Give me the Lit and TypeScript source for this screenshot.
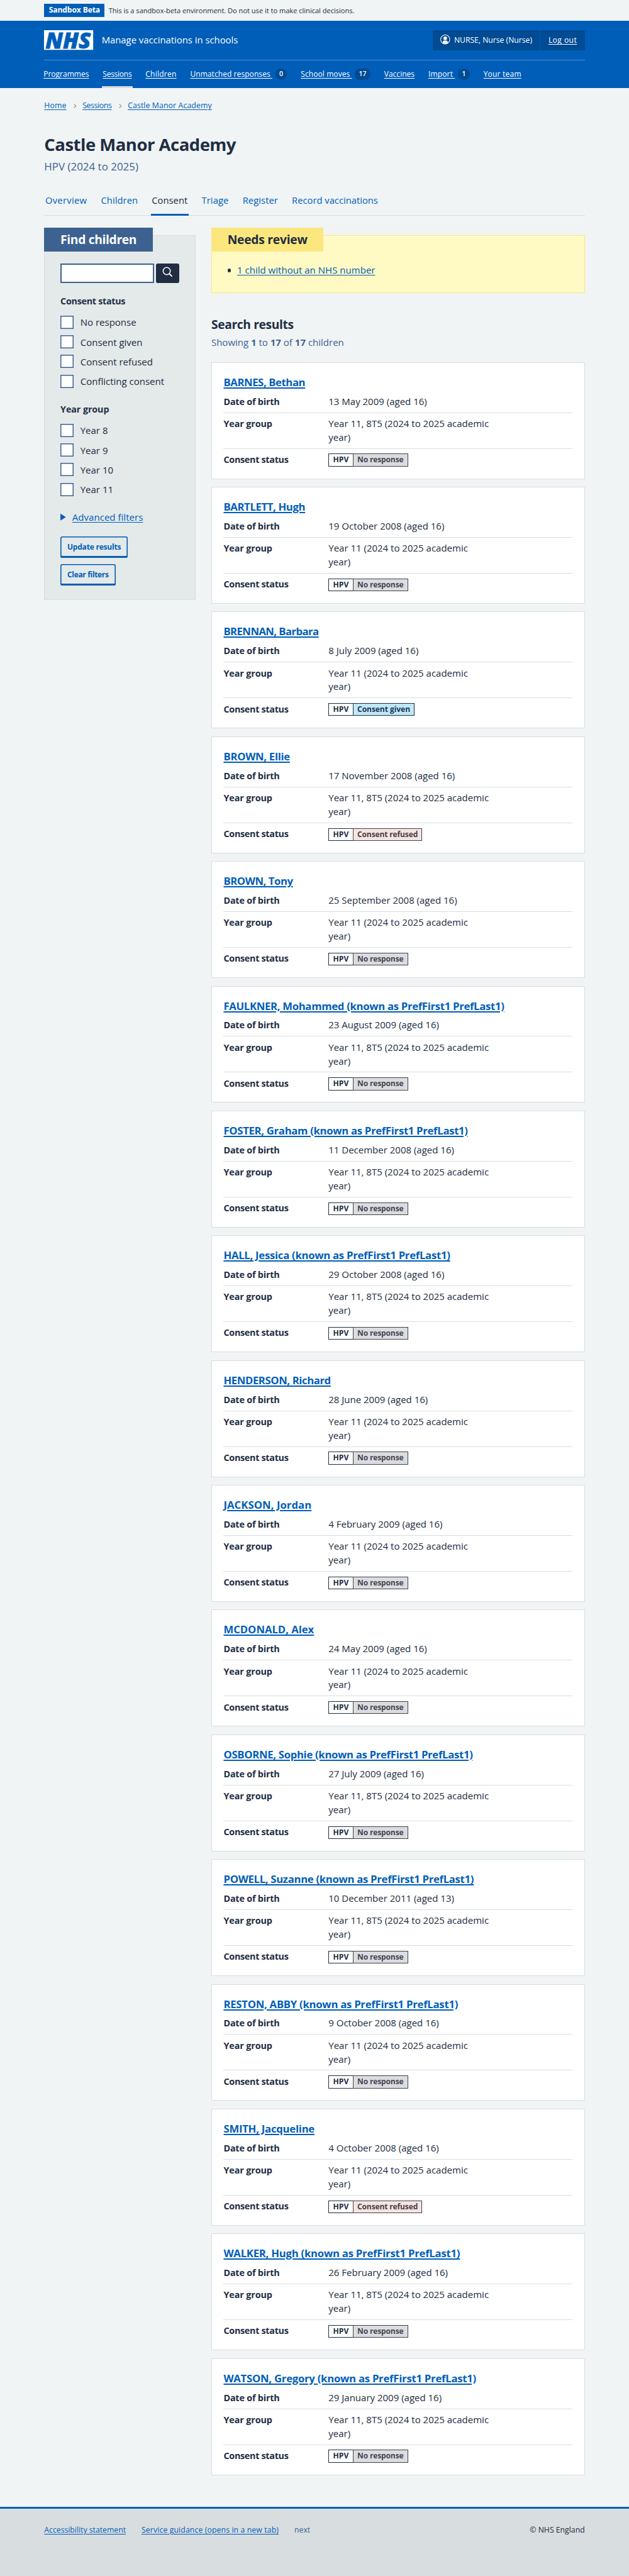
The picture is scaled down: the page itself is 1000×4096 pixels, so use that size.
import { LitElement, html, css, svg, unsafeCSS } from "lit";
import { customElement, property } from "lit/decorators.js";
import { classMap } from "lit/directives/class-map.js";
import { styleMap } from "lit/directives/style-map.js";

/** Design units are scaled to the width of the page. */
const SCALE = 0.78125;
const p = (units: number) => unsafeCSS(`${+(units * SCALE).toFixed(3)}px`);

const FAMILY = '"Open Sans", "Noto Sans", sans-serif';
const ctx = document.createElement("canvas").getContext("2d")!;

/** Tracking that brings a label to its intended width in design units. */
const track = (text: string, width: number, size: number, weight = 400) => {
  ctx.font = `${weight} ${size * SCALE}px ${FAMILY}`;
  const gap = (width * SCALE - ctx.measureText(text).width) / text.length;
  return styleMap({ letterSpacing: `${gap.toFixed(3)}px` });
};

type Status = "none" | "given" | "refused";
const STATUS_TEXT: Record<Status, string> = {
  none: "No response",
  given: "Consent given",
  refused: "Consent refused",
};
const STATUS_WIDTH: Record<Status, number> = { none: 94, given: 107.5, refused: 123 };

interface Child {
  name: string;
  width: number;
  dob: string;
  group: string;
  status: Status;
}

const child = (name: string, width: number, dob: string, group = "Year 11", status: Status = "none"): Child => ({
  name, width, dob, group, status,
});
const KNOWN = " (known as PrefFirst1 PrefLast1)";
const T5 = "Year 11, 8T5";

const CHILDREN: Child[] = [
  child("BARNES, Bethan", 166, "13 May 2009 (aged 16)", T5),
  child("BARTLETT, Hugh", 166, "19 October 2008 (aged 16)"),
  child("BRENNAN, Barbara", 193.5, "8 July 2009 (aged 16)", "Year 11", "given"),
  child("BROWN, Ellie", 135, "17 November 2008 (aged 16)", T5, "refused"),
  child("BROWN, Tony", 141, "25 September 2008 (aged 16)"),
  child("FAULKNER, Mohammed" + KNOWN, 571, "23 August 2009 (aged 16)", T5),
  child("FOSTER, Graham" + KNOWN, 497, "11 December 2008 (aged 16)", T5),
  child("HALL, Jessica" + KNOWN, 461, "29 October 2008 (aged 16)", T5),
  child("HENDERSON, Richard", 218, "28 June 2009 (aged 16)"),
  child("JACKSON, Jordan", 179, "4 February 2009 (aged 16)"),
  child("MCDONALD, Alex", 184, "24 May 2009 (aged 16)"),
  child("OSBORNE, Sophie" + KNOWN, 507, "27 July 2009 (aged 16)", T5),
  child("POWELL, Suzanne" + KNOWN, 509, "10 December 2011 (aged 13)", T5),
  child("RESTON, ABBY" + KNOWN, 477, "9 October 2008 (aged 16)"),
  child("SMITH, Jacqueline", 185, "4 October 2008 (aged 16)", "Year 11", "refused"),
  child("WALKER, Hugh" + KNOWN, 481, "26 February 2009 (aged 16)", T5),
  child("WATSON, Gregory" + KNOWN, 514, "29 January 2009 (aged 16)", T5),
];

@customElement("child-card")
class ChildCard extends LitElement {
  @property({ attribute: false }) child!: Child;

  static styles = css`
    :host {
      display: block;
      box-sizing: border-box;
      height: ${p(237.93)};
      padding: calc(${p(26.8)} - 1px) calc(${p(25)} - 1px) 0;
      background: #fff;
      border: 1px solid #d8dde0;
    }
    .name {
      height: ${p(28)};
      font-size: ${p(21.4)};
      line-height: ${p(28)};
      font-weight: 700;
      white-space: nowrap;
      color: #005eb8;
      text-decoration: underline;
      text-decoration-thickness: 1.5px;
      text-underline-offset: 2px;
    }
    .row {
      display: flex;
      box-sizing: border-box;
      font-size: ${p(19.2)};
      line-height: ${p(28)};
      color: #202d42;
    }
    .row + .row {
      padding-top: ${p(8)};
    }
    .dob {
      height: ${p(48.7)};
      padding-top: ${p(11.5)};
      border-bottom: 1px solid #d8dde0;
    }
    .group {
      height: ${p(73)};
      border-bottom: 1px solid #d8dde0;
    }
    .key {
      width: ${p(213.5)};
      font-weight: 700;
      font-size: ${p(18.4)};
    }
    .value {
      width: ${p(330)};
    }
    .tags {
      display: flex;
      padding-top: ${p(2)};
    }
    .tag {
      box-sizing: border-box;
      height: ${p(26)};
      padding: 0 ${p(8)};
      border: 1px solid #202d42;
      font-size: ${p(15.5)};
      line-height: calc(${p(26)} - 2px);
      font-weight: 700;
      white-space: nowrap;
    }
    .status {
      margin-left: -1px;
    }
    .none {
      background: #d8dde0;
      border-color: #4a3f48;
      color: #4a4450;
    }
    .given {
      background: #bfe8f7;
      color: #1f3557;
    }
    .refused {
      background: #f2e5e4;
      border-color: #503e40;
      color: #503e40;
    }
  `;

  render() {
    const c = this.child;
    const group = `${c.group} (2024 to 2025 academic year)`;
    return html`
      <div class="name"><span style=${track(c.name, c.width, 21.4, 700)}>${c.name}</span></div>
      <div class="row dob">
        <div class="key"><span style=${track("Date of birth", 114, 18.4, 700)}>Date of birth</span></div>
        <div class="value">${c.dob}</div>
      </div>
      <div class="row group">
        <div class="key"><span style=${track("Year group", 99, 18.4, 700)}>Year group</span></div>
        <div class="value">${group}</div>
      </div>
      <div class="row">
        <div class="key"><span style=${track("Consent status", 132, 18.4, 700)}>Consent status</span></div>
        <div class="tags">
          <div class="tag"><span style=${track("HPV", 32, 15.5, 700)}>HPV</span></div>
          <div class="tag status ${c.status}">
            <span style=${track(STATUS_TEXT[c.status], STATUS_WIDTH[c.status], 15.5, 700)}>${STATUS_TEXT[c.status]}</span>
          </div>
        </div>
      </div>
    `;
  }
}

const NAV: [string, number, string?][] = [
  ["Programmes", 92.5],
  ["Sessions", 59],
  ["Children", 63],
  ["Unmatched responses", 163, "0"],
  ["School moves", 100, "17"],
  ["Vaccines", 62],
  ["Import", 50, "1"],
  ["Your team", 77],
];
const TABS: [string, number][] = [
  ["Overview", 85],
  ["Children", 75],
  ["Consent", 73],
  ["Triage", 55],
  ["Register", 72],
  ["Record vaccinations", 175],
];
const CRUMBS: [string, number][] = [
  ["Home", 45],
  ["Sessions", 59],
  ["Castle Manor Academy", 171],
];

const chevron = svg`<svg class="chevron" viewBox="0 0 6 9"><path d="M1 .7 4.8 4.5 1 8.3" fill="none" stroke="#a58f86" stroke-width="1.5"/></svg>`;

@customElement("app-root")
class AppRoot extends LitElement {
  static styles = css`
    :host {
      display: flex;
      flex-direction: column;
      height: 4096px;
      overflow: hidden;
      background: #f0f4f5;
      color: #202d42;
      font-family: ${unsafeCSS(FAMILY)};
    }
    a {
      color: #005eb8;
      text-decoration: underline;
      text-decoration-thickness: 1px;
      text-underline-offset: 2px;
      white-space: nowrap;
    }
    .banner {
      display: flex;
      align-items: center;
      gap: ${p(8)};
      height: ${p(42)};
      padding: 0 ${p(90)};
      font-size: ${p(14.16)};
    }
    .phase {
      width: ${p(123)};
      height: ${p(26)};
      line-height: ${p(26)};
      text-align: center;
      font-size: ${p(15.6)};
      font-weight: 700;
      background: #005eb8;
      color: #fff;
    }
    header {
      box-sizing: border-box;
      height: ${p(137)};
      padding: 0 ${p(90)};
      background: #005eb8;
      color: #fff;
    }
    header a {
      color: #fff;
    }
    .brand {
      display: flex;
      align-items: center;
      box-sizing: border-box;
      height: ${p(81)};
      border-bottom: 1px solid #4a90cf;
    }
    .logo {
      width: ${p(100)};
      height: ${p(40)};
      overflow: visible;
    }
    .service {
      margin-left: ${p(17)};
      padding-bottom: ${p(2)};
      font-size: ${p(19)};
    }
    .account {
      display: flex;
      align-items: center;
      margin-left: auto;
      height: ${p(40)};
      width: ${p(310)};
      border-radius: ${p(4)};
      background: #004b93;
      font-size: ${p(15.6)};
      white-space: nowrap;
    }
    .user {
      display: flex;
      align-items: center;
      box-sizing: border-box;
      width: ${p(220)};
      height: 100%;
      padding-left: ${p(16)};
      gap: ${p(8)};
      border-right: 1px solid #005eb8;
    }
    .avatar {
      width: ${p(20)};
      height: ${p(20)};
      margin-bottom: ${p(2)};
    }
    .logout {
      padding-left: ${p(16)};
    }
    .nav {
      display: flex;
      gap: ${p(24)};
      height: ${p(56)};
      margin-left: ${p(-3.5)};
      font-size: ${p(15.4)};
    }
    .nav-item {
      display: flex;
      align-items: center;
      padding: 0 ${p(2)};
    }
    .nav-item.current {
      box-shadow: inset 0 ${p(-4)} #d8dde0;
    }
    .count {
      min-width: ${p(8)};
      height: ${p(22)};
      padding: 0 ${p(8)};
      margin-left: ${p(6)};
      border-radius: ${p(11)};
      background: #004b93;
      font-size: ${p(13.5)};
      font-weight: 600;
      line-height: ${p(22)};
      text-align: center;
    }
    .page {
      padding: 0 ${p(90)};
      flex: none;
    }
    .crumbs {
      display: flex;
      align-items: center;
      height: ${p(72)};
      font-size: ${p(15.8)};
    }
    .chevron {
      width: ${p(6)};
      height: ${p(9)};
      margin: ${p(2)} ${p(12)} 0 ${p(15)};
    }
    h1 {
      margin: ${p(21.3)} 0 0;
      font-size: ${p(35.2)};
      line-height: ${p(44)};
      font-weight: 700;
    }
    .caption {
      margin-top: ${p(6.3)};
      font-size: ${p(21.7)};
      line-height: ${p(32)};
      color: #3d6291;
    }
    .tabs {
      display: flex;
      gap: ${p(24.4)};
      height: ${p(62.6)};
      margin-top: ${p(21.8)};
      font-size: ${p(18.9)};
      line-height: ${p(62.6)};
      box-shadow: inset 0 -1px #d8dde0;
    }
    .tab {
      padding: 0 ${p(2)};
      color: #005eb8;
      white-space: nowrap;
    }
    .tab.current {
      color: #202d42;
      box-shadow: inset 0 ${p(-4)} #005eb8;
    }
    .columns {
      display: grid;
      grid-template-columns: ${p(308)} ${p(760)};
      column-gap: ${p(32)};
      align-items: start;
      padding-top: ${p(40)};
    }
    .panel {
      box-sizing: border-box;
      padding: 0 calc(${p(33)} - 1px);
      border: 1px solid #d8dde0;
      background: #e4e9e9;
    }
    .filters {
      height: ${p(742)};
    }
    .label {
      width: max-content;
      box-sizing: border-box;
      height: ${p(48)};
      margin: calc(${p(-15)} - 1px) 0 0 ${p(-33)};
      padding: 0 ${p(33)};
      font-size: ${p(24.66)};
      line-height: ${p(48)};
      font-weight: 700;
      background: #3d6291;
      color: #fff;
    }
    .search {
      display: flex;
      gap: ${p(4)};
      margin-top: ${p(24)};
    }
    .field {
      box-sizing: border-box;
      width: ${p(190)};
      height: ${p(40)};
      border: 2px solid #3d6291;
      background: #fff;
    }
    .go {
      display: flex;
      justify-content: center;
      box-sizing: border-box;
      width: ${p(48)};
      height: ${p(40)};
      padding-top: ${p(7)};
      border-radius: ${p(4)};
      background: #202d42;
    }
    .go svg {
      width: ${p(22)};
      height: ${p(22)};
    }
    .legend {
      margin: ${p(23)} 0 ${p(9)};
      font-size: ${p(18.3)};
      line-height: ${p(28)};
      font-weight: 700;
    }
    .option {
      display: flex;
      align-items: center;
      gap: ${p(13.5)};
      height: ${p(40)};
      font-size: ${p(19.2)};
      white-space: nowrap;
    }
    .box {
      box-sizing: border-box;
      width: ${p(27)};
      height: ${p(27)};
      background: #fff;
      box-shadow: inset 0 0 0 1.5px #3d6291;
    }
    .advanced {
      display: flex;
      align-items: center;
      gap: ${p(13)};
      height: ${p(28)};
      margin: ${p(22.5)} 0 ${p(25.5)};
      font-size: ${p(19.3)};
    }
    .arrow {
      width: ${p(11)};
      height: ${p(14)};
      background: #005eb8;
      clip-path: polygon(0 0, 100% 50%, 0 100%);
    }
    .button {
      display: flex;
      align-items: center;
      justify-content: center;
      box-sizing: border-box;
      width: ${p(137)};
      height: ${p(44)};
      padding-bottom: ${p(1)};
      margin-bottom: ${p(12)};
      border-radius: ${p(4)};
      background: #e4e9e9;
      color: #005eb8;
      box-shadow: inset 0 0 0 1.6px #005eb8, inset 0 ${p(-4)} #005eb8;
      font-size: ${p(15.4)};
      font-weight: 700;
    }
    .button.clear {
      width: ${p(112)};
    }
    .review {
      height: ${p(118)};
      border-color: #fae779;
      background: #fff9c4;
    }
    .review .label {
      background: #fbe77e;
      color: #202d42;
    }
    .bullet {
      display: flex;
      align-items: center;
      gap: ${p(12.5)};
      height: ${p(28)};
      margin-top: ${p(23)};
      font-size: ${p(19.25)};
    }
    .dot {
      width: ${p(7)};
      height: ${p(7)};
      margin-top: ${p(3)};
      border-radius: 50%;
      background: #202d42;
    }
    h2 {
      margin: ${p(47)} 0 0;
      font-size: ${p(24.56)};
      line-height: ${p(32)};
      font-weight: 700;
    }
    .showing {
      margin: ${p(8)} 0 ${p(25)};
      font-size: ${p(19.2)};
      line-height: ${p(28)};
      color: #3d6291;
    }
    .showing b {
      font-weight: 700;
    }
    .cards {
      display: flex;
      flex-direction: column;
      gap: ${p(16)};
    }
    footer {
      display: flex;
      flex: 1;
      gap: ${p(32)};
      margin-top: ${p(64.3)};
      padding: ${p(32)} ${p(90)} 0;
      border-top: 3px solid #005eb8;
      background: #d8dde0;
      font-size: ${p(15.7)};
      line-height: ${p(24)};
      white-space: nowrap;
    }
    .next {
      color: #3d6291;
    }
    .copyright {
      margin-left: auto;
    }
  `;

  private options(items: string[]) {
    return items.map((t) => html`<div class="option"><span class="box"></span><span>${t}</span></div>`);
  }

  private link(text: string, width: number, size: number) {
    return html`<a style=${track(text, width, size)}>${text}</a>`;
  }

  private bold(text: string, width: number, size: number) {
    return html`<span style=${track(text, width, size, 700)}>${text}</span>`;
  }

  render() {
    return html`
      <div class="banner">
        <div class="phase">${this.bold("Sandbox Beta", 104, 15.6)}</div>
        <div>This is a sandbox-beta environment. Do not use it to make clinical decisions.</div>
      </div>
      <header>
        <div class="brand">
          <svg class="logo" viewBox="0 0 100 40">
            <rect width="100" height="40" fill="#fff" />
            <text x="3" y="36.5" textLength="92" lengthAdjust="spacingAndGlyphs" fill="#005eb8" stroke="#005eb8"
              stroke-width="1" font-family="Open Sans" font-size="46" font-weight="800" font-style="italic">NHS</text>
          </svg>
          <div class="service">Manage vaccinations in schools</div>
          <div class="account">
            <div class="user">
              <svg class="avatar" viewBox="0 0 20 20">
                <circle cx="10" cy="10" r="9.3" fill="none" stroke="#fff" stroke-width="1.3" />
                <circle cx="10" cy="7.4" r="3.7" fill="#fff" />
                <path d="M4.8 17.6V15.200C4.800 13.400 6 12.200 7.800 12.200H12.200C14 12.200 15.200 13.400 15.200 15.200V17.600L10 19.600Z" fill="#fff" />
              </svg>
              <span>NURSE, Nurse (Nurse)</span>
            </div>
            <div class="logout">${this.link("Log out", 58, 15.6)}</div>
          </div>
        </div>
        <nav class="nav">
          ${NAV.map(
            ([text, width, count]) => html`<div class=${classMap({ "nav-item": true, current: text === "Sessions" })}>
              <a style=${track(text, width, 15.4)}>${count ? text + "\u00a0" : text}</a>
              ${count ? html`<span class="count">${count}</span>` : ""}
            </div>`,
          )}
        </nav>
      </header>
      <div class="page">
        <div class="crumbs">
          ${CRUMBS.map(([text, width], i) => html`${i ? chevron : ""}${this.link(text, width, 15.8)}`)}
        </div>
        <h1>${this.bold("Castle Manor Academy", 390, 35.2)}</h1>
        <div class="caption">HPV (2024 to 2025)</div>
        <div class="tabs">
          ${TABS.map(
            ([text, width]) => html`<div class=${classMap({ tab: true, current: text === "Consent" })}>
              <span style=${track(text, width, 18.9)}>${text}</span>
            </div>`,
          )}
        </div>
        <div class="columns">
          <div class="panel filters">
            <div class="label">${this.bold("Find children", 155, 24.66)}</div>
            <div class="search">
              <div class="field"></div>
              <div class="go">
                <svg viewBox="0 0 22 22" fill="none" stroke="#fff" stroke-width="2">
                  <circle cx="9" cy="9" r="7.3" />
                  <path d="m14 14 6 6" stroke-width="2.6" />
                </svg>
              </div>
            </div>
            <div class="legend">${this.bold("Consent status", 132, 18.3)}</div>
            ${this.options(["No response", "Consent given", "Consent refused", "Conflicting consent"])}
            <div class="legend">${this.bold("Year group", 99, 18.3)}</div>
            ${this.options(["Year 8", "Year 9", "Year 10", "Year 11"])}
            <div class="advanced"><span class="arrow"></span>${this.link("Advanced filters", 144, 19.3)}</div>
            <div class="button">${this.bold("Update results", 109, 15.4)}</div>
            <div class="button clear">${this.bold("Clear filters", 84, 15.4)}</div>
          </div>
          <main>
            <div class="panel review">
              <div class="label">${this.bold("Needs review", 162.5, 24.66)}</div>
              <div class="bullet">
                <span class="dot"></span>${this.link("1 child without an NHS number", 281, 19.25)}
              </div>
            </div>
            <h2>${this.bold("Search results", 167.5, 24.56)}</h2>
            <div class="showing">Showing <b>1</b> to <b>17</b> of <b>17</b> children</div>
            <div class="cards">${CHILDREN.map((c) => html`<child-card .child=${c}></child-card>`)}</div>
          </main>
        </div>
      </div>
      <footer>
        ${this.link("Accessibility statement", 166, 15.7)}
        ${this.link("Service guidance (opens in a new tab)", 279, 15.7)}
        <span class="next">next</span>
        <span class="copyright">© NHS England</span>
      </footer>
    `;
  }
}
